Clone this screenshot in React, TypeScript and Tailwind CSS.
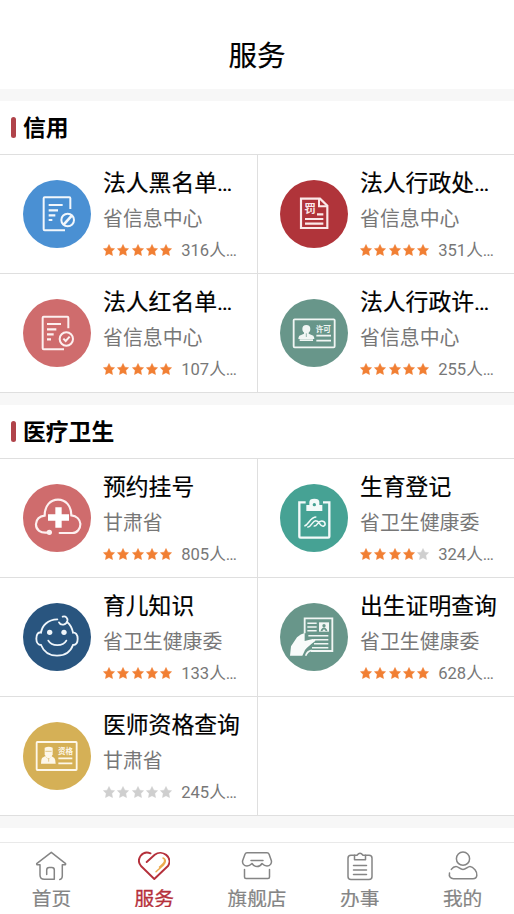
import React from 'react';

type IconName = 'blacklist' | 'penalty' | 'redlist' | 'permit' | 'booking' | 'birthReg' | 'baby' | 'certificate' | 'doctor';

interface Service {
  name: string;
  dept: string;
  stars: number;
  count: string;
  icon: IconName;
}

const creditServices: Service[] = [
  { name: '法人黑名单…', dept: '省信息中心', stars: 5, count: '316人…', icon: 'blacklist' },
  { name: '法人行政处…', dept: '省信息中心', stars: 5, count: '351人…', icon: 'penalty' },
  { name: '法人红名单…', dept: '省信息中心', stars: 5, count: '107人…', icon: 'redlist' },
  { name: '法人行政许…', dept: '省信息中心', stars: 5, count: '255人…', icon: 'permit' },
];

const healthServices: Service[] = [
  { name: '预约挂号', dept: '甘肃省', stars: 5, count: '805人…', icon: 'booking' },
  { name: '生育登记', dept: '省卫生健康委', stars: 4, count: '324人…', icon: 'birthReg' },
  { name: '育儿知识', dept: '省卫生健康委', stars: 5, count: '133人…', icon: 'baby' },
  { name: '出生证明查询', dept: '省卫生健康委', stars: 5, count: '628人…', icon: 'certificate' },
  { name: '医师资格查询', dept: '甘肃省', stars: 0, count: '245人…', icon: 'doctor' },
];

const discs: Record<IconName, string> = {
  blacklist: 'bg-[#4a90d3]',
  penalty: 'bg-[#b0343a]',
  redlist: 'bg-[#cf6c6d]',
  permit: 'bg-[#68968a]',
  booking: 'bg-[#cf6c6d]',
  birthReg: 'bg-[#46a294]',
  baby: 'bg-[#29557f]',
  certificate: 'bg-[#68968a]',
  doctor: 'bg-[#d5b056]',
};

const glyphText = 'font-["Noto_Sans_CJK_SC",sans-serif] font-bold';

const drawings: Record<IconName, React.ReactNode> = {
  blacklist: (
    <g fill="none" stroke="#f2f7fc" strokeWidth="6">
      <path d="M142 87V55q0-3-3-3H65q-3 0-3 3v93q0 3 3 3h61" />
      <path d="M77 75h42M77 91h28M77 106h20M77 120h11" strokeWidth="6.500" />
      <circle cx="134" cy="120" r="19" />
      <path d="M122 134l25-28" strokeWidth="8" />
    </g>
  ),
  penalty: (
    <g fill="none" stroke="#fbe9e9" strokeWidth="6.500">
      <path d="M63 56h57l22 21v67H63z" />
      <path d="M117 56v23h25" strokeWidth="6" />
      <path d="M111 103h19M75 117h55M75 131h55" />
      <text x="73" y="98" fontSize="35" fill="#fbe9e9" stroke="none" className={glyphText}>罚</text>
    </g>
  ),
  redlist: (
    <g fill="none" stroke="#fdf0f0" strokeWidth="6">
      <path d="M136 88V56q0-3-3-3H62q-3 0-3 3v92q0 3 3 3h61" />
      <path d="M72 75h42M72 91h28M72 106h20M72 121h12" strokeWidth="6.500" />
      <circle cx="130" cy="120" r="20" />
      <path d="M121 119l7 7 12-13" />
    </g>
  ),
  permit: (
    <g fill="none" stroke="#f1f6f4" strokeWidth="5.500">
      <rect x="41" y="61" width="123" height="84" rx="3" />
      <circle cx="79" cy="90" r="12" fill="#f1f6f4" stroke="none" />
      <path d="M72 98h14v6l14 6q3 4 3 10H55q0-6 3-10l14-6zM59 121h40v5H59z" fill="#f1f6f4" stroke="none" />
      <path d="M79 103v11" stroke="#68968a" strokeWidth="2" />
      <path d="M109 110h44M109 125h44" />
      <text x="107" y="98" fontSize="23" fill="#f1f6f4" stroke="none" className={glyphText}>许可</text>
    </g>
  ),
  booking: (
    <g fill="none" stroke="#fdf0f0" strokeWidth="6.500" strokeLinecap="round">
      <path d="M77 145c-25 5-39-9-38-25 1-14 12-23 26-25 0-30 17-48 40-48s40 18 40 47c16 2 26 13 27 25 1 15-10 28-24 28h-38" />
      <circle cx="79" cy="145" r="8" fill="#fdf0f0" stroke="none" />
      <path d="M97 70h19v21h22v19h-22v21H97v-21H75V91h22z" fill="#fff" stroke="none" />
    </g>
  ),
  birthReg: (
    <g fill="none" stroke="#f3faf9" strokeWidth="7">
      <path d="M77 55H58v102q0 4 4 4h82q4 0 4-4V55h-19" />
      <path d="M79 63h9v-9q0-10 15-10t15 10v9h9v18H79z" fill="#f3faf9" stroke="none" />
      <circle cx="103" cy="62" r="5" fill="#46a294" stroke="none" />
      <path d="M73 126c14-3 16-27 36-27M82 130c15-2 15-21 26-20 10 0 12 19 22 17 9-3 6-16-5-16-13 0-13 18-24 15" strokeWidth="4.500" />
    </g>
  ),
  baby: (
    <g fill="none" stroke="#f0f6fb" strokeWidth="5.500" strokeLinecap="round">
      <path d="M103 49C74 50 57 68 54 89c-8-2-14 4-14 18 0 13 7 19 14 19 8 20 25 32 48 32s41-12 48-32c8 0 14-7 14-19s-7-20-14-18c-3-14-8-24-17-31" />
      <path d="M119 41c9-3 16 4 14 13-3 12-20 15-25 4" />
      <path d="M76 113c10 18 44 18 54 0" />
      <circle cx="80" cy="88" r="8" fill="#f0f6fb" stroke="none" />
      <circle cx="123" cy="88" r="8" fill="#f0f6fb" stroke="none" />
    </g>
  ),
  certificate: (
    <g fill="none" stroke="#f1f6f4" strokeWidth="5.500">
      <path d="M74 91V46h83v98h-64" />
      <path d="M82 61h28M82 72h28M82 83h28M85 98h60M102 110h43M102 122h43M96 134h49" strokeWidth="4.500" />
      <path d="M117 58h30v28h-30z" fill="#f1f6f4" stroke="none" />
      <circle cx="132" cy="68" r="5" fill="#68968a" stroke="none" />
      <path d="M122 85q0-8 10-12 10 4 10 12l-6-2-4-5-4 5z" fill="#68968a" stroke="none" />
      <path d="M30 158l3-28 18-27q11-10 23-13v24l24-6q11 0 7 7-14 10-24 19-7 6-9 14l-5 10z" fill="#f8fbfa" stroke="none" />
      <path d="M77 158q5-14 18-16" strokeWidth="5" />
    </g>
  ),
  doctor: (
    <g fill="none" stroke="#fdf7e9" strokeWidth="5.500">
      <rect x="41" y="60" width="120" height="84" rx="2" />
      <path d="M65 77q12-6 24 0v20q-2 10-12 14-10-4-12-14z" fill="#fdf7e9" stroke="none" />
      <path d="M67 102l-10 6q-3 5-3 17h44q0-12-4-17l-9-6q-8 17-18 0z" fill="#fdf7e9" stroke="none" />
      <path d="M67 88h19M77 108v11" stroke="#d5b056" strokeWidth="2" />
      <path d="M106 109h42M106 124h42" />
      <text x="105" y="95" fontSize="22.500" fill="#fdf7e9" stroke="none" className={glyphText}>资格</text>
    </g>
  ),
};

function Stars({ value }: { value: number }) {
  return (
    <div className="flex gap-[2.3px]">
      {[0, 1, 2, 3, 4].map((i) => (
        <svg key={i} className={i < value ? 'size-3 text-[#f17f33]' : 'size-3 text-[#cfcfcf]'} viewBox="0 0 24 24" fill="currentColor" stroke="currentColor" strokeWidth="1" strokeLinejoin="round">
          <path d="M12 1l3.500 7.300 7.600 1.100-5.500 5.400 1.400 8.200-7-3.700L5 23l1.400-8.200L.9 9.400l7.600-1.100z" />
        </svg>
      ))}
    </div>
  );
}

function ServiceCell({ service }: { service: Service }) {
  return (
    <div className="flex h-[119px] border-t border-[#dfdfdf] pl-[23px] odd:border-r even:pl-[22px]">
      <div className={`mt-[25px] size-[68px] shrink-0 rounded-full ${discs[service.icon]}`}>
        <svg viewBox="0 0 204 204" className="size-full">{drawings[service.icon]}</svg>
      </div>
      <div className="ml-3 min-w-0 whitespace-nowrap pt-[13px]">
        <div className="h-8 text-[22.8px] leading-8 text-black [-webkit-text-stroke:0.2px_black]">{service.name}</div>
        <div className="mt-1.5 h-7 text-[19.9px] leading-7 text-[#777]">{service.dept}</div>
        <div className="mt-1 flex h-6 items-center">
          <Stars value={service.stars} />
          <span className="ml-[9px] pt-0.5 text-[16.6px] leading-6 text-[#777]">{service.count}</span>
        </div>
      </div>
    </div>
  );
}

function Section({ title, services }: { title: string; services: Service[] }) {
  return (
    <section className="shrink-0 border-b border-[#dfdfdf] bg-white">
      <h2 className="flex h-[53px] items-center pl-[11px] text-[22.8px] font-bold text-black">
        <span className="mr-[7px] h-[21px] w-[5px] rounded-full bg-[#b0434a]" />
        <span className="pt-[4px]">{title}</span>
      </h2>
      <div className="grid grid-cols-[258px_256px]">
        {services.map((s) => <ServiceCell key={s.name} service={s} />)}
        {services.length % 2 === 1 && <div className="border-t border-[#dfdfdf]" />}
      </div>
    </section>
  );
}

const tabs = [
  {
    label: '首页',
    drawing: <path d="M5 14.700H2q-.7-.7 0-1.300L16.300 2.300l14 11.100q.7.7 0 1.300h-3V26q0 3-2.500 3.500M5 14.700V25q0 4.300 4.300 4.300h10V20q0-2.500-2.500-2.500h-2.600q-2.500 0-2.500 2.500v4.500" />,
  },
  {
    label: '服务',
    active: true,
    drawing: (
      <>
        <path d="M8.700 12l8-7.300c7.500-5.500 18.500 2.300 13.500 11L16.300 29 3 16C-2.500 9 4.500 0 12.500 3.300" strokeWidth="1.900" />
        <path d="M25 8c3.500 1.500 2.500 5 .5 7L18 21.700M26.500 10c1 3-3 5-5 7" stroke="#eba94d" strokeWidth="1.500" />
      </>
    ),
  },
  {
    label: '旗舰店',
    drawing: (
      <>
        <path d="M6 2.700h20q1.500 0 2.100 1.500l2.200 6.300c.8 3-1.300 5.500-4.300 5.500-2.500 0-3.500-1-5-2.500-2.500 4-7.500 4-10 0C9.500 15 8.500 16 6 16c-3 0-5.100-2.500-4.300-5.500L4 4.200q.6-1.500 2-1.500zM10 10.500h12" />
        <path d="M3.500 19.500v7.500q0 1.500 1.500 1.500h22q1.500 0 1.500-1.500v-7.500" />
      </>
    ),
  },
  {
    label: '办事',
    drawing: (
      <>
        <path d="M10.500 5.200H7q-3 0-3 3v18.300q0 3 3 3h18q3 0 3-3V8.200q0-3-3-3h-3.500" />
        <path d="M10.500 9.800V5.200H13Q16 1.500 19 5.200h2.500v4.600zM9.500 15.500h13M9.500 20h13M9.500 24.500h13" />
      </>
    ),
  },
  {
    label: '我的',
    drawing: (
      <>
        <circle cx="16" cy="8.700" r="6.600" />
        <path d="M2.500 23c-1 4 1.500 5.700 4 5.700h19.500c5 0 4.500-6 2-9-2-2.500-3-3.300-5-3.300-2.500 0-4 3-7 3s-4.500-3-7-3c-2.500 0-3.500 1.300-4.700 3" />
      </>
    ),
  },
];

export default function App() {
  return (
    <div className='flex h-[914px] w-[514px] flex-col overflow-hidden bg-white font-[Roboto,"Noto_Sans_CJK_SC",sans-serif]'>
      <header className="flex h-[89px] shrink-0 items-center justify-center pt-[26px] text-[28.5px] text-black [-webkit-text-stroke:0.2px_black]">服务</header>
      <main className="flex h-[753px] shrink-0 flex-col overflow-hidden">
        <div className="h-3 shrink-0 bg-[#f7f7f7]" />
        <Section title="信用" services={creditServices} />
        <div className="h-3 shrink-0 bg-[#f7f7f7]" />
        <Section title="医疗卫生" services={healthServices} />
        <div className="h-3 shrink-0 bg-[#f7f7f7]" />
      </main>
      <nav className="grid h-[65px] shrink-0 grid-cols-5 overflow-hidden border-t border-[#e9e9e9] pt-[7px]">
        {tabs.map((t) => (
          <div key={t.label} className={`flex flex-col items-center ${t.active ? 'text-[#b5303b] [-webkit-text-stroke:0.3px_#b5303b]' : 'text-[#858585] [-webkit-text-stroke:0.2px_#858585]'}`}>
            <svg viewBox="0 0 32 32" className="size-8 shrink-0" fill="none" stroke="currentColor" strokeWidth="1.500" strokeLinecap="round" strokeLinejoin="round">
              {t.drawing}
            </svg>
            <span className="mt-1 text-[19.7px] leading-7">{t.label}</span>
          </div>
        ))}
      </nav>
    </div>
  );
}
